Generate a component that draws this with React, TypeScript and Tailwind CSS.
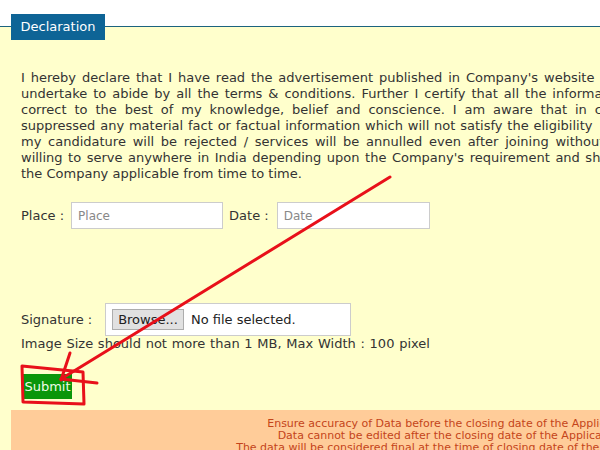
const DECLARATION_LINES = [
  { text: "I hereby declare that I have read the advertisement published in Company's website and", spacing: "[word-spacing:1.8px]" },
  { text: "undertake to abide by all the terms & conditions. Further I certify that all the information", spacing: "[word-spacing:1.85px]" },
  { text: "correct to the best of my knowledge, belief and conscience. I am aware that in case", spacing: "[word-spacing:3.8px]" },
  { text: "suppressed any material fact or factual information which will not satisfy the eligibility", spacing: "[word-spacing:0.7px]" },
  { text: "my candidature will be rejected / services will be annulled even after joining without any", spacing: "[word-spacing:2.6px]" },
  { text: "willing to serve anywhere in India depending upon the Company's requirement and shall", spacing: "[word-spacing:1.4px]" },
  { text: "the Company applicable from time to time.", spacing: "" },
];

const NOTES = [
  "Ensure accuracy of Data before the closing date of the Application.",
  "Data cannot be edited after the closing date of the Application.",
  "The data will be considered final at the time of closing date of the Application.",
];

export default function App() {
  return (
    <div className="relative w-[600px] h-[450px] overflow-hidden bg-white font-['DejaVu_Sans',Verdana,sans-serif] text-[13px] text-[#333]">
      <div className="w-[904px]">
        {/* legend bar */}
        <div className="h-[27px] pt-[14px] pl-[11px] border-b border-[#1c637e] bg-white">
          <div className="relative z-10 flex h-[26px] w-[94px] items-center justify-center bg-[#0e6496] text-[13px] text-white">
            Declaration
          </div>
        </div>

        <div className="bg-[#ffffcc] px-[11px] pb-[20px]">
          <div className="px-[10px] pt-[43px]">
            <div className="leading-[16px]">
              {DECLARATION_LINES.map((line) => (
                <div key={line.text} className={`whitespace-nowrap ${line.spacing}`}>
                  {line.text}
                </div>
              ))}
            </div>

            <div className="mt-[20px] flex h-[27px] items-center">
              <span>Place :</span>
              <input
                placeholder="Place"
                className="ml-[7px] h-[27px] w-[152px] border border-[#ccc] bg-white px-[6px] text-[12px] text-[#333] placeholder:text-[#888] outline-none"
              />
              <span className="ml-[6px]">Date :</span>
              <input
                placeholder="Date"
                className="ml-[8px] h-[27px] w-[153px] border border-[#ccc] bg-white px-[6px] text-[12px] text-[#333] placeholder:text-[#888] outline-none"
              />
            </div>

            <div className="mt-[74px] flex items-center">
              <span className="w-[84px]">Signature :</span>
              <div className="flex h-[33px] w-[246px] items-center border border-[#ccc] bg-white pl-[6px]">
                <button className="h-[21px] w-[72px] border border-[#adadad] bg-[#e1e1e1] text-[13px] text-[#222]">
                  Browse...
                </button>
                <span className="ml-[7px] text-[13px] text-[#222]">No file selected.</span>
              </div>
            </div>
            <div className="leading-[16px] [word-spacing:0.6px]">Image Size should not more than 1 MB, Max Width : 100 pixel</div>

            <button className="mt-[22px] ml-[2px] flex h-[25px] w-[49px] items-center justify-center bg-[#0a960a] text-[13px] text-[#eefce6]">
              Submit
            </button>
          </div>

          <div className="mt-[11px] bg-[#ffcc99] pt-[8px] pb-[6px] text-center text-[11px] leading-[12px] text-[#c4441a]">
            {NOTES.map((n) => (
              <div key={n}>{n}</div>
            ))}
          </div>
        </div>
      </div>

      {/* red hand-drawn annotation */}
      <svg className="pointer-events-none absolute inset-0" width="600" height="450" viewBox="0 0 600 450">
        <g stroke="#e8101a" strokeWidth="3" fill="none" strokeLinecap="round" strokeLinejoin="round">
          <line x1="390" y1="177" x2="61" y2="379" />
          <line x1="70" y1="353" x2="61" y2="380" />
          <line x1="61" y1="379" x2="97" y2="383" />
          <polygon points="22,366 83,372 84,404 23,402" />
        </g>
      </svg>
    </div>
  );
}
